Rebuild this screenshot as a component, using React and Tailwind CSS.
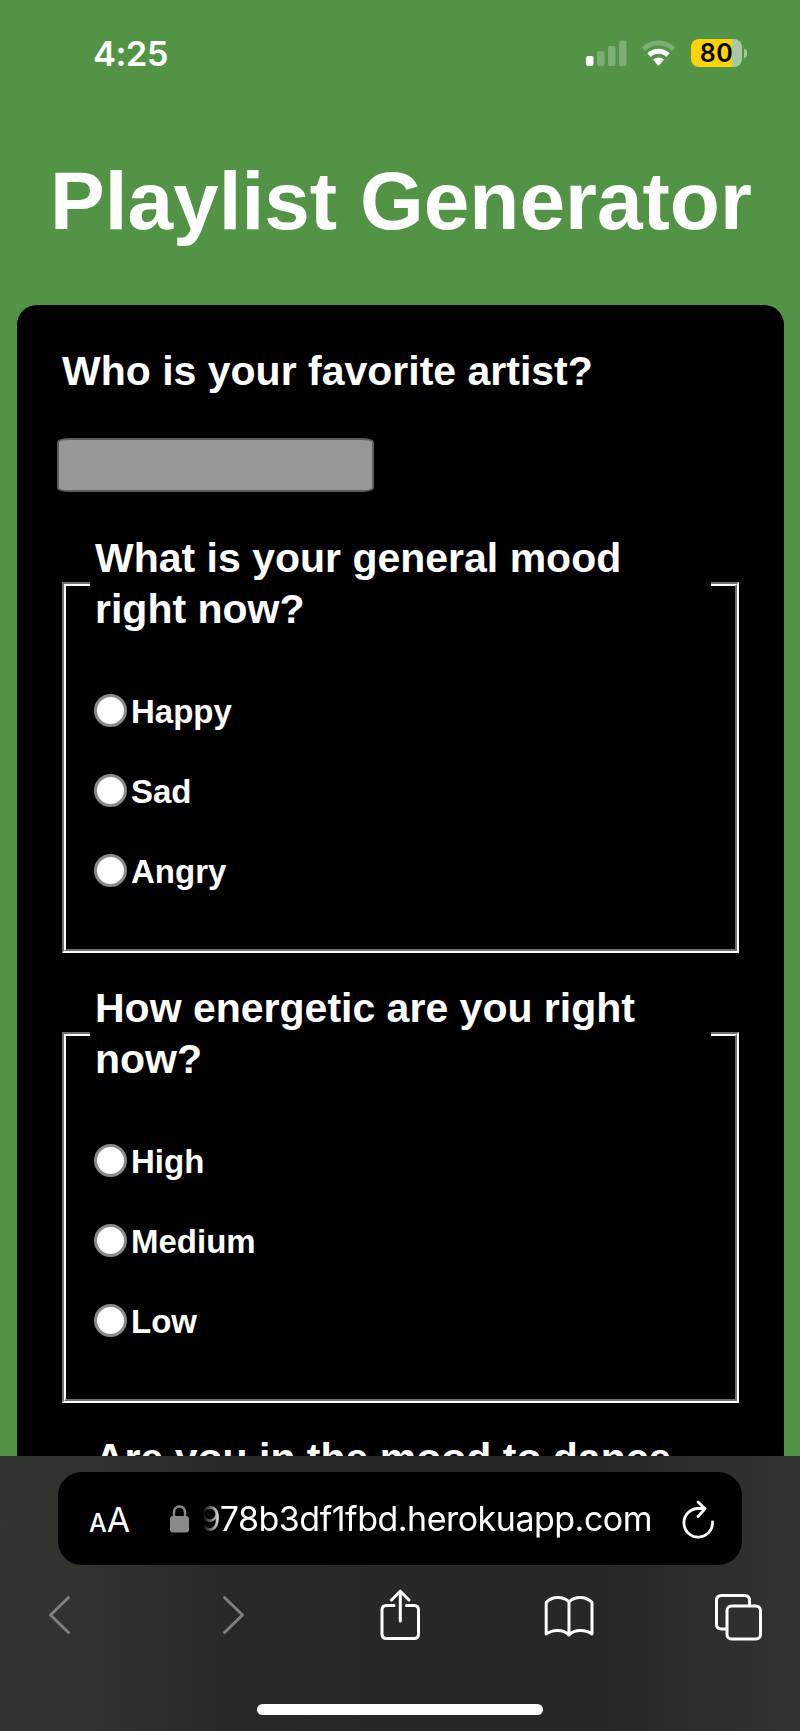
import React from "react";

const sans = "font-['Liberation_Sans',Arial,sans-serif]";
const inter = "font-['Inter',sans-serif]";

function StatusBar() {
  return (
    <header className="flex h-[107px] items-start justify-between pl-[93px] pr-[53px] pt-[33px]">
      <span className={`${inter} text-[34.5px] leading-[42px] font-semibold tracking-[-0.6px] text-white`}>4:25</span>
      <div className="flex items-start pt-[6px]">
        <svg className="mt-[1px]" width="42" height="28" viewBox="584 40 42 28">
          <rect x="585" y="56" width="7.5" height="10" rx="2" fill="#fff" />
          <g fill="#fff" fillOpacity="0.25">
            <rect x="596" y="51" width="7.5" height="15" rx="2" />
            <rect x="607" y="46" width="7.5" height="20" rx="2" />
            <rect x="618" y="40.5" width="7.5" height="25.5" rx="2" />
          </g>
        </svg>
        <svg className="ml-[14px] mt-[1px]" width="36" height="28" viewBox="640 40 36 28" fill="none" strokeWidth="5">
          <path d="M642.5 49.2A21.5 21.5 0 0 1 672.5 49.2" stroke="#fff" strokeOpacity="0.25" />
          <path d="M648 55.1A13.5 13.5 0 0 1 667 55.1" stroke="#fff" />
          <path d="M652 59.6Q657.5 55.6 663 59.6L658.2 65.2Q657.5 66 656.8 65.2Z" fill="#fff" />
        </svg>
        <div className="ml-[14px] flex items-center">
          <div className={`${inter} flex h-7 w-[51px] items-center justify-center rounded-[8px] bg-[linear-gradient(90deg,#fbd30a_41px,#a9c9a2_41px)] text-[25px] font-semibold leading-7 tracking-[0.5px] text-black`}>
            80
          </div>
          <div className="ml-[2px] h-[9px] w-[3px] rounded-r-full bg-[#a3c59b]" />
        </div>
      </div>
    </header>
  );
}

function Question({ title, options }) {
  return (
    <fieldset className="mx-[45px] mb-[79px] h-[371px] border-2 border-t-[#707070] border-r-white border-b-white border-l-[#707070]">
      <div className="h-[367px] border-2 border-t-white border-r-[#707070] border-b-[#707070] border-l-white">
        <h2 className="mx-6 -mt-[53px] mb-[35px] h-[102px] bg-black px-[5px] text-[41px] leading-[51px] font-bold">{title}</h2>
        {options.map((option) => (
          <label key={option} className="flex h-20 items-center pl-7 text-[33px] leading-[37px] font-bold">
            <input
              type="radio"
              name={title}
              className="mr-1 size-[33px] appearance-none rounded-full border-[3px] border-[#8a8a8a] bg-white"
            />
            <span className="pt-[2px]">{option}</span>
          </label>
        ))}
      </div>
    </fieldset>
  );
}

function BrowserBar() {
  return (
    <footer className="h-[275px] shrink-0 bg-[linear-gradient(90deg,#31342f_0%,#30322e_12%,#282828_30%,#272727_75%,#30322f_97%)] pt-4">
      <div className={`${inter} mx-auto flex h-[93px] w-[684px] items-center rounded-[24px] bg-black pl-[31px] pr-[28px] text-white`}>
        <div className="flex w-[41px] items-baseline pt-[5px] font-medium">
          <span className="text-[25px] leading-8">A</span>
          <span className="text-[34px] leading-8 font-normal">A</span>
        </div>
        <svg className="ml-[40px] shrink-0" width="19" height="28" viewBox="0 0 19 28">
          <path d="M4 12V7.5C4 3.8 6.2 1.5 9.5 1.5S15 3.8 15 7.5V12" fill="none" stroke="#8a8a8a" strokeWidth="2.4" />
          <rect x="0" y="11" width="19" height="16.5" rx="3" fill="#8a8a8a" />
        </svg>
        <div className="ml-[14px] flex w-[449px] justify-end overflow-hidden whitespace-nowrap text-[34px] leading-[44px] tracking-[-0.5px] [mask-image:linear-gradient(90deg,transparent_0px,black_18px)]">
          978b3df1fbd.herokuapp.com
        </div>
        <svg className="ml-auto shrink-0" width="32" height="40" viewBox="681 1497 32 40" fill="none" stroke="#fff" strokeWidth="2.8" strokeLinecap="round" strokeLinejoin="round">
          <path d="M711.5 1520A14.3 14.3 0 1 1 697.2 1506.5H703.5" />
          <path d="M697 1500L704 1506.8L697 1514.5" />
        </svg>
      </div>
      <nav className="mt-6 flex h-[52px] items-center pl-[48px]">
        <svg width="23" height="40" viewBox="0 0 23 40" fill="none" stroke="#7f7f7f" strokeWidth="3" strokeLinecap="round" strokeLinejoin="round">
          <path d="M20.5 2.5L2.5 20L20.5 37.5" />
        </svg>
        <svg className="ml-[151px]" width="23" height="40" viewBox="0 0 23 40" fill="none" stroke="#7f7f7f" strokeWidth="3" strokeLinecap="round" strokeLinejoin="round">
          <path d="M2.5 2.5L20.5 20L2.5 37.5" />
        </svg>
        <svg className="ml-[134px]" width="42" height="52" viewBox="379 1589 42 52" fill="none" stroke="#fff" strokeWidth="3" strokeLinecap="round" strokeLinejoin="round">
          <path d="M394 1605.5H386.5Q382 1605.5 382 1610V1634Q382 1638.5 386.5 1638.5H414Q418.5 1638.5 418.5 1634V1610Q418.5 1605.5 414 1605.5H406.5" />
          <path d="M400.3 1621V1591.5M391.5 1600L400.3 1591.2L409 1600" />
        </svg>
        <svg className="ml-[122px] mt-1" width="52" height="46" viewBox="543 1594 52 46" fill="none" stroke="#fff" strokeWidth="3" strokeLinecap="round" strokeLinejoin="round">
          <path d="M569 1635V1602Q565 1597.5 557.5 1597.5Q551 1597.5 546.2 1602.5V1634Q551 1630.5 557.5 1630.5Q565 1630.5 569 1635Q573 1630.5 580.5 1630.5Q587 1630.5 592 1634V1602.5Q587 1597.5 580.5 1597.5Q573 1597.5 569 1602" />
        </svg>
        <svg className="ml-[118px] mt-[3px]" width="50" height="50" viewBox="713 1591 50 50" fill="none" stroke="#fff" strokeWidth="3">
          <rect x="727" y="1605" width="33.5" height="33" rx="4.5" />
          <path d="M726.5 1628H721.5Q716.5 1628 716.5 1623V1599.5Q716.5 1594.5 721.5 1594.5H744.5Q749.5 1594.5 749.5 1599.5V1604" />
        </svg>
      </nav>
      <div className="mx-auto mt-[63px] h-[11px] w-[286px] rounded-full bg-white" />
    </footer>
  );
}

export default function App() {
  return (
    <div className={`${sans} flex h-[1731px] w-[800px] flex-col overflow-hidden bg-[#529345] text-white`}>
      <main className="h-[1456px] shrink-0 overflow-hidden">
        <StatusBar />
        <h1 className="mt-[47px] h-[151px] whitespace-nowrap pl-[50px] text-[82px] leading-[94px] font-bold">Playlist Generator</h1>
        <form className="ml-[17px] mr-4 h-[1600px] rounded-[20px] bg-black pt-[41px]">
          <h2 className="ml-[45px] text-[41px] leading-[51px] font-bold">Who is your favorite artist?</h2>
          <input
            type="text"
            aria-label="Favorite artist"
            className="mt-[41px] ml-10 mb-[90px] block h-[54px] w-[317px] rounded-[12px/4px] border-2 border-[#5c5c5c] bg-[#979797]"
          />
          <Question title="What is your general mood right now?" options={["Happy", "Sad", "Angry"]} />
          <Question title="How energetic are you right now?" options={["High", "Medium", "Low"]} />
          <Question title="Are you in the mood to dance" options={[]} />
        </form>
      </main>
      <BrowserBar />
    </div>
  );
}
